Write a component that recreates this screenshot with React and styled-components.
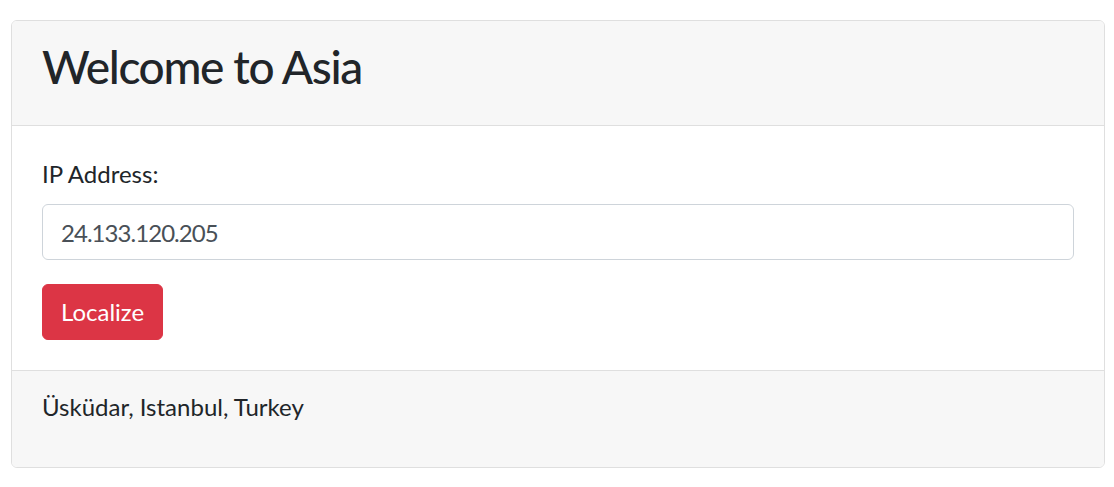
import React, { useState } from 'react'
import styled, { createGlobalStyle } from 'styled-components'

const GlobalStyles = createGlobalStyle`
  *, *::before, *::after {
    box-sizing: border-box;
  }

  body {
    margin: 0;
    background: #fff;
    color: #212529;
    font-family: "Segoe UI", Lato, "Noto Sans", sans-serif;
    font-size: 24px;
    line-height: 1.5;
  }
`

const Page = styled.main`
  padding: 20px 9px 19px 11px;
`

const Card = styled.section`
  display: flex;
  flex-direction: column;
  border: 1px solid #dfdfdf;
  border-radius: 6px;
  overflow: hidden;
`

const CardHeader = styled.header`
  padding: 18px 30px;
  background: #f7f7f7;
  border-bottom: 1px solid #dfdfdf;

  h2 {
    margin: 0 0 12px;
    font-size: 46px;
    font-weight: 500;
    line-height: 56px;
    letter-spacing: -0.03em;
  }
`

const CardBody = styled.div`
  padding: 30px;
`

const FormGroup = styled.div`
  display: flex;
  flex-direction: column;
  margin-bottom: 24px;

  label {
    margin-bottom: 12px;
  }
`

const Input = styled.input`
  height: 56px;
  padding: 9px 18px;
  font: inherit;
  letter-spacing: -0.04em;
  color: #495057;
  background: #fff;
  border: 1px solid #ced4da;
  border-radius: 6px;
  outline: none;
`

const Button = styled.button`
  align-self: flex-start;
  height: 56px;
  padding: 9px 18px;
  font: inherit;
  color: #fff;
  background: ${({ $variant }) => ($variant === 'danger' ? '#dc3545' : '#007bff')};
  border: 1px solid ${({ $variant }) => ($variant === 'danger' ? '#dc3545' : '#007bff')};
  border-radius: 6px;
  cursor: pointer;
`

const CardFooter = styled.footer`
  padding: 18px 30px;
  background: #f7f7f7;
  border-top: 1px solid #dfdfdf;

  p {
    margin: 0 0 24px;
  }
`

const App = () => {
  const [ip, setIp] = useState('24.133.120.205')

  return (
    <Page>
      <GlobalStyles />
      <Card>
        <CardHeader>
          <h2>Welcome to Asia</h2>
        </CardHeader>
        <CardBody>
          <FormGroup>
            <label htmlFor="ip">IP Address:</label>
            <Input id="ip" value={ip} onChange={(e) => setIp(e.target.value)} />
          </FormGroup>
          <Button $variant="danger">Localize</Button>
        </CardBody>
        <CardFooter>
          <p>Üsküdar, Istanbul, Turkey</p>
        </CardFooter>
      </Card>
    </Page>
  )
}

export default App
